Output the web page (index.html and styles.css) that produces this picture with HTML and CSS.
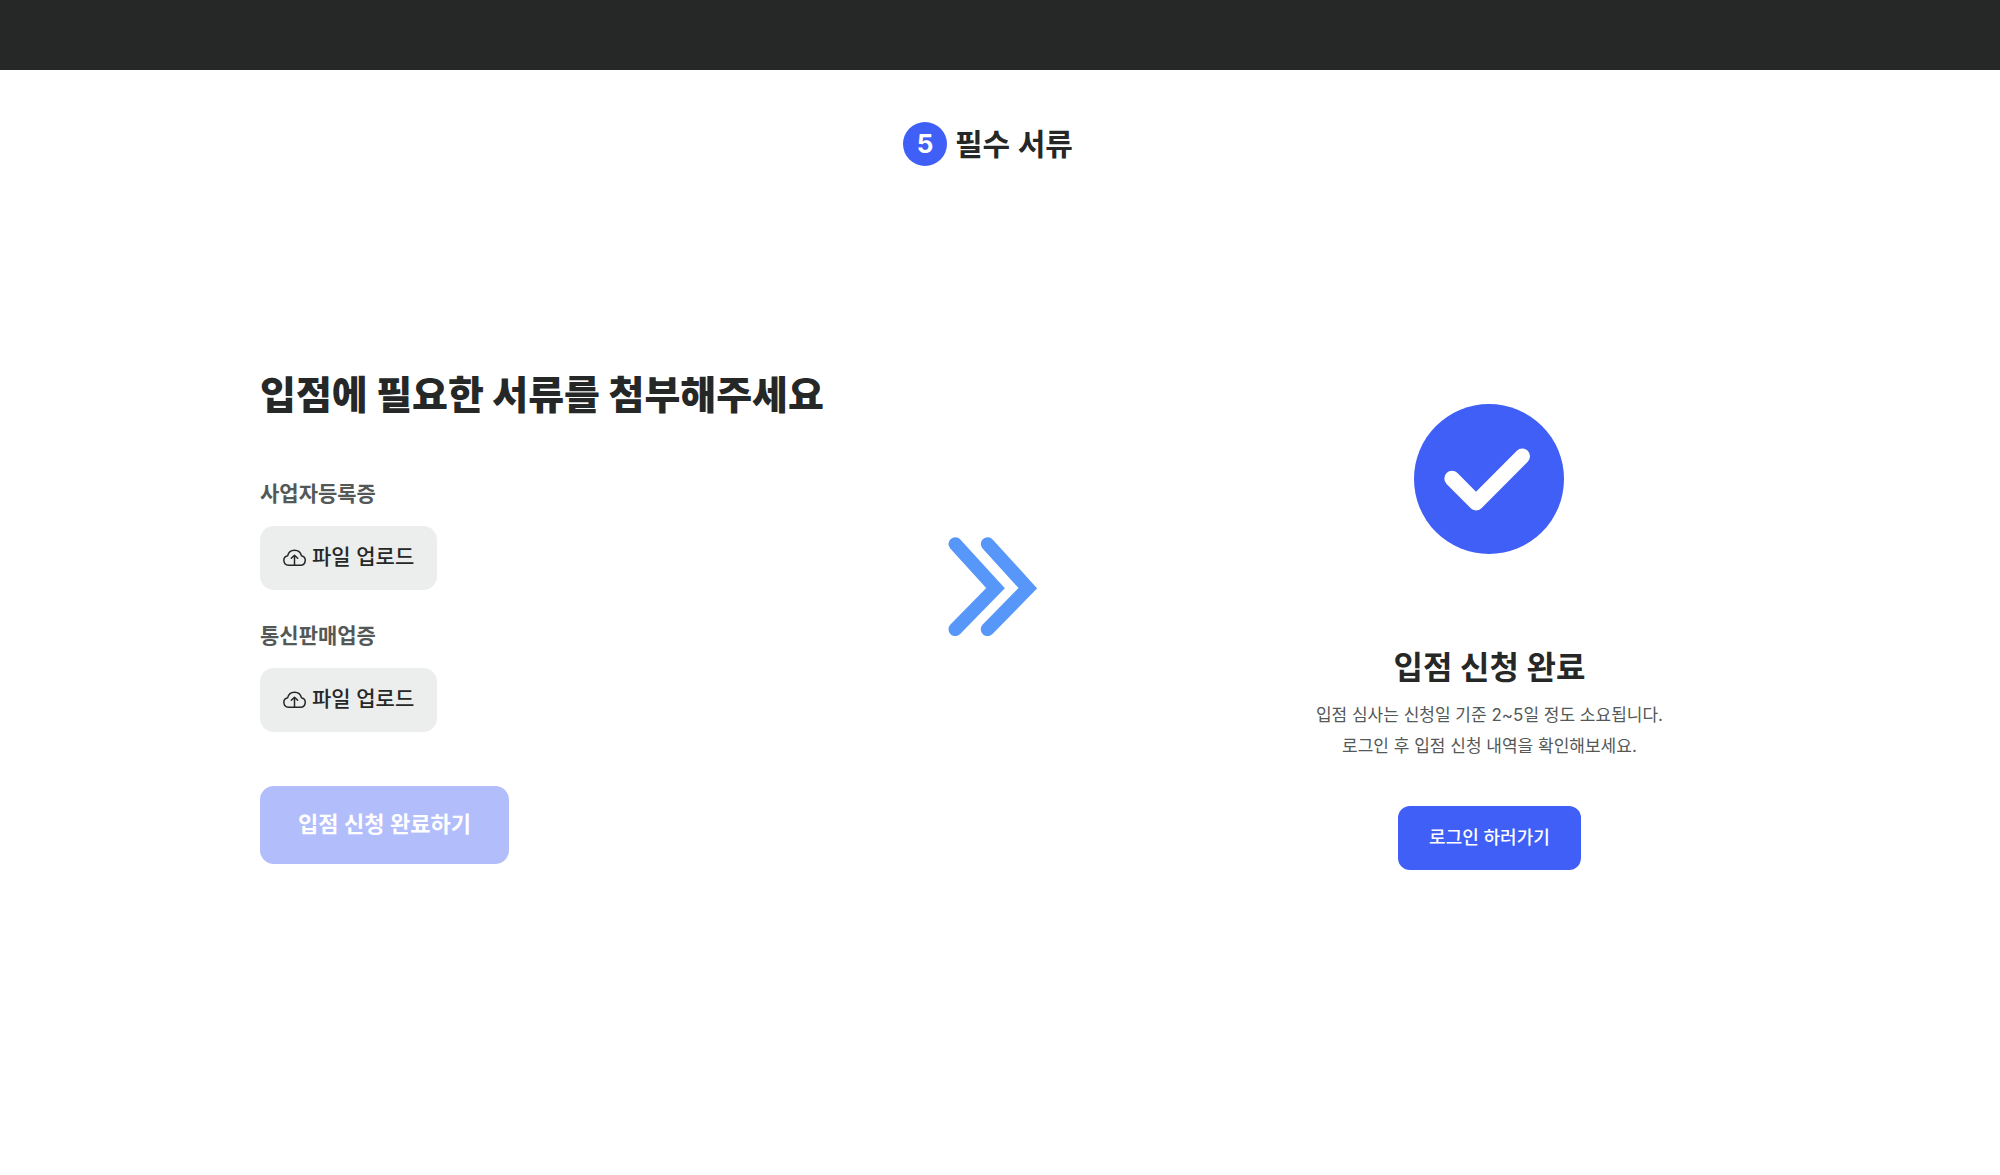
FILE: index.html
```html
<!DOCTYPE html>
<html lang="ko">
<head>
    <meta charset="UTF-8">
    <meta name="viewport" content="width=device-width, initial-scale=1.0">
    <title>입점 신청</title>
    <link rel="stylesheet" href="styles.css">
</head>
<body>

    <header class="topbar"></header>

    <main>
        <h1 class="step">
            <span class="step-number">5</span>
            필수 서류
        </h1>

        <div class="content">
            <form class="documents">
                <h2>입점에 필요한 서류를 첨부해주세요</h2>

                <div class="field">
                    <label for="business">사업자등록증</label>
                    <button type="button" class="upload" id="business">
                        <svg class="cloud" viewBox="0 0 23 18" aria-hidden="true">
                            <path d="M5.5 17.2h12a4.8 4.8 0 0 0 .9-9.5A7 7 0 0 0 4.7 7.7A4.8 4.8 0 0 0 5.5 17.2z"/>
                            <path d="M11.5 17V7.5M8.3 10.3l3.2-3.1l3.2 3.1"/>
                        </svg>
                        파일 업로드
                    </button>
                </div>

                <div class="field">
                    <label for="mailorder">통신판매업증</label>
                    <button type="button" class="upload" id="mailorder">
                        <svg class="cloud" viewBox="0 0 23 18" aria-hidden="true">
                            <path d="M5.5 17.2h12a4.8 4.8 0 0 0 .9-9.5A7 7 0 0 0 4.7 7.7A4.8 4.8 0 0 0 5.5 17.2z"/>
                            <path d="M11.5 17V7.5M8.3 10.3l3.2-3.1l3.2 3.1"/>
                        </svg>
                        파일 업로드
                    </button>
                </div>

                <button type="submit" class="submit" disabled>입점 신청 완료하기</button>
            </form>

            <svg class="arrow" viewBox="0 0 89 99" aria-hidden="true">
                <path d="M7.3 7l40.2 44.2l-40.2 41.1M39.6 7l40.2 44.2l-40.2 41.1"/>
            </svg>

            <section class="complete">
                <svg class="check" viewBox="0 0 150 150" aria-hidden="true">
                    <circle cx="75" cy="75" r="75"/>
                    <path d="M38 74.5l24 24.2l46.3-46.4"/>
                </svg>
                <h2>입점 신청 완료</h2>
                <p>입점 심사는 신청일 기준 2~5일 정도 소요됩니다.<br>로그인 후 입점 신청 내역을 확인해보세요.</p>
                <a class="login" href="#">로그인 하러가기</a>
            </section>
        </div>
    </main>

</body>
</html>
```

FILE: styles.css
```css
* {
    box-sizing: border-box;
}
body {
    margin: 0;
    font-family: Inter, "Noto Sans CJK KR", sans-serif;
    background-color: white;
    color: #262827;
}
h1, h2, p {
    margin: 0;
}
button {
    border: none;
    font-family: inherit;
    line-height: 30px;
    cursor: pointer;
}
.topbar {
    height: 70px;
    background-color: #262827;
}
.step {
    display: flex;
    justify-content: center;
    align-items: center;
    gap: 8px;
    margin-top: 52px;
    padding-right: 24px;
    font-size: 30px;
    line-height: 44px;
    font-weight: 600;
}
.step-number {
    width: 44px;
    height: 44px;
    border-radius: 50%;
    background-color: #405ff6;
    color: white;
    font-size: 26px;
    font-weight: 700;
    text-align: center;
}
.content {
    display: grid;
    grid-template-columns: 19fr auto 25fr;
    align-items: start;
    margin-top: 205px;
    padding: 0 58px 48px 13%;
}

/* documents */
.documents {
    display: flex;
    flex-direction: column;
    align-items: flex-start;
}
.documents h2 {
    margin-bottom: 60px;
    font-size: 39px;
    line-height: 48px;
    font-weight: 800;
    white-space: nowrap;
}
.field {
    display: flex;
    flex-direction: column;
    align-items: flex-start;
    gap: 17px;
    margin-bottom: 31px;
}
.field label {
    color: #545857;
    font-size: 21px;
    line-height: 30px;
    font-weight: 600;
}
.upload {
    display: flex;
    align-items: center;
    gap: 6px;
    height: 64px;
    padding: 0 23px 2px;
    border-radius: 14px;
    background-color: #eceeed;
    color: #262827;
    font-size: 21px;
    font-weight: 500;
}
.cloud {
    width: 23px;
    height: 18px;
    fill: none;
    stroke: #262827;
    stroke-width: 1.5;
    stroke-linecap: round;
    stroke-linejoin: round;
}
.submit {
    height: 78px;
    margin-top: 23px;
    padding: 0 38px 2px;
    border-radius: 14px;
    background-color: #b2bdfb;
    color: white;
    font-size: 22px;
    font-weight: 600;
    cursor: default;
}

.arrow {
    width: 89px;
    margin-top: 166px;
    fill: none;
    stroke: #5897fa;
    stroke-width: 13.6;
    stroke-linecap: round;
}

/* complete */
.complete {
    display: flex;
    flex-direction: column;
    align-items: center;
    padding-top: 33px;
    text-align: center;
}
.check {
    width: 150px;
    height: 150px;
    fill: #405ff6;
}
.check path {
    fill: none;
    stroke: white;
    stroke-width: 15.4;
    stroke-linecap: round;
    stroke-linejoin: round;
}
.complete h2 {
    margin-top: 94px;
    font-size: 32px;
    line-height: 40px;
}
.complete p {
    margin-top: 12px;
    color: #545857;
    font-size: 17px;
    line-height: 31px;
}
.login {
    margin-top: 44px;
    padding: 0 31px;
    border-radius: 12px;
    background-color: #405ff6;
    color: white;
    font-size: 18px;
    line-height: 64px;
    font-weight: 500;
    text-decoration: none;
}
```
